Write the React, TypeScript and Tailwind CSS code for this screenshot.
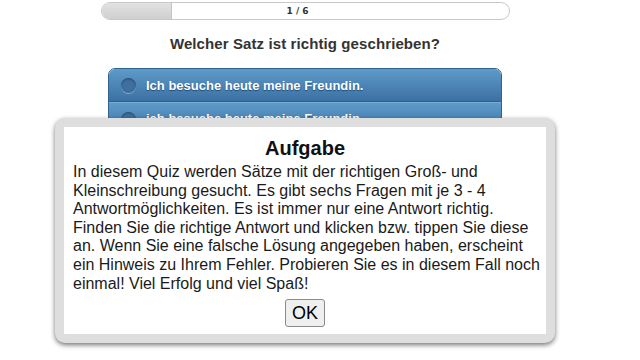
import React from "react";

const options = [
  "Ich besuche heute meine Freundin.",
  "ich besuche heute meine Freundin.",
];

const lines = [
  "In diesem Quiz werden Sätze mit der richtigen Groß- und",
  "Kleinschreibung gesucht. Es gibt sechs Fragen mit je 3 - 4",
  "Antwortmöglichkeiten. Es ist immer nur eine Antwort richtig.",
  "Finden Sie die richtige Antwort und klicken bzw. tippen Sie diese",
  "an. Wenn Sie eine falsche Lösung angegeben haben, erscheint",
  "ein Hinweis zu Ihrem Fehler. Probieren Sie es in diesem Fall noch",
  "einmal! Viel Erfolg und viel Spaß!",
];

export default function App() {
  return (
    <div className="relative w-[640px] h-[360px] overflow-hidden bg-white font-['Liberation_Sans',Arial,sans-serif]">
      <div className="w-[610px] flex flex-col items-center pt-[2px]">
        {/* progress bar */}
        <div className="relative w-[409px] h-[18px] rounded-full border border-[#c8c8c8] bg-white overflow-hidden flex">
          <div className="w-[70px] h-full bg-gradient-to-b from-[#e2e2e2] to-[#cfcfcf] border-r border-[#c4c4c4]" />
          <div className="absolute left-[185px] top-[3px] text-[9px] font-bold text-[#333] font-['DejaVu_Sans',sans-serif] leading-[11px]">
            1 / 6
          </div>
        </div>

        {/* question */}
        <div className="mt-[15px] text-[15px] font-bold text-[#333] leading-[18px] tracking-[0.1px]">
          Welcher Satz ist richtig geschrieben?
        </div>

        {/* options */}
        <div className="mt-[15px] w-[394px] flex flex-col rounded-t-[7px] overflow-hidden border border-[#2f6392]">
          {options.map((o, i) => (
            <div
              key={i}
              className="h-[33px] flex items-center bg-gradient-to-b from-[#5e9bc9] to-[#3b6fa2] border-t border-[#79add3] first:border-t-0 shadow-[inset_0_-1px_0_#2f5f8c]"
            >
              <div className="ml-[12px] w-[15px] h-[15px] rounded-full bg-[#3e6f9e] shadow-[inset_0_1px_2px_rgba(0,0,0,0.35),0_1px_0_rgba(255,255,255,0.35)]" />
              <div className="ml-[10px] text-[13px] font-bold text-white [text-shadow:0_1px_1px_#1e4a74]">
                {o}
              </div>
            </div>
          ))}
        </div>
      </div>

      {/* modal */}
      <div className="absolute left-[55px] top-[118px] w-[500px] h-[225px] rounded-[10px] bg-[#dedede] p-[9px] shadow-[0_2px_5px_rgba(0,0,0,0.55)]">
        <div className="w-full h-full bg-white flex flex-col items-center px-[9px] pt-[10px]">
          <div className="text-[20px] font-bold text-[#111] leading-[23px]">Aufgabe</div>
          <p className="mt-[3px] w-full text-[16px] leading-[18.6px] text-[#1a1a1a] whitespace-nowrap">
            {lines.map((l, i) => (
              <React.Fragment key={i}>
                {l}
                {i < lines.length - 1 && <br />}
              </React.Fragment>
            ))}
          </p>
          <button className="mt-[6px] h-[28px] px-[6px] text-[18px] leading-[20px] text-black bg-[#efefef] border border-[#8a8a8a] rounded-[3px]">
            OK
          </button>
        </div>
      </div>
    </div>
  );
}
